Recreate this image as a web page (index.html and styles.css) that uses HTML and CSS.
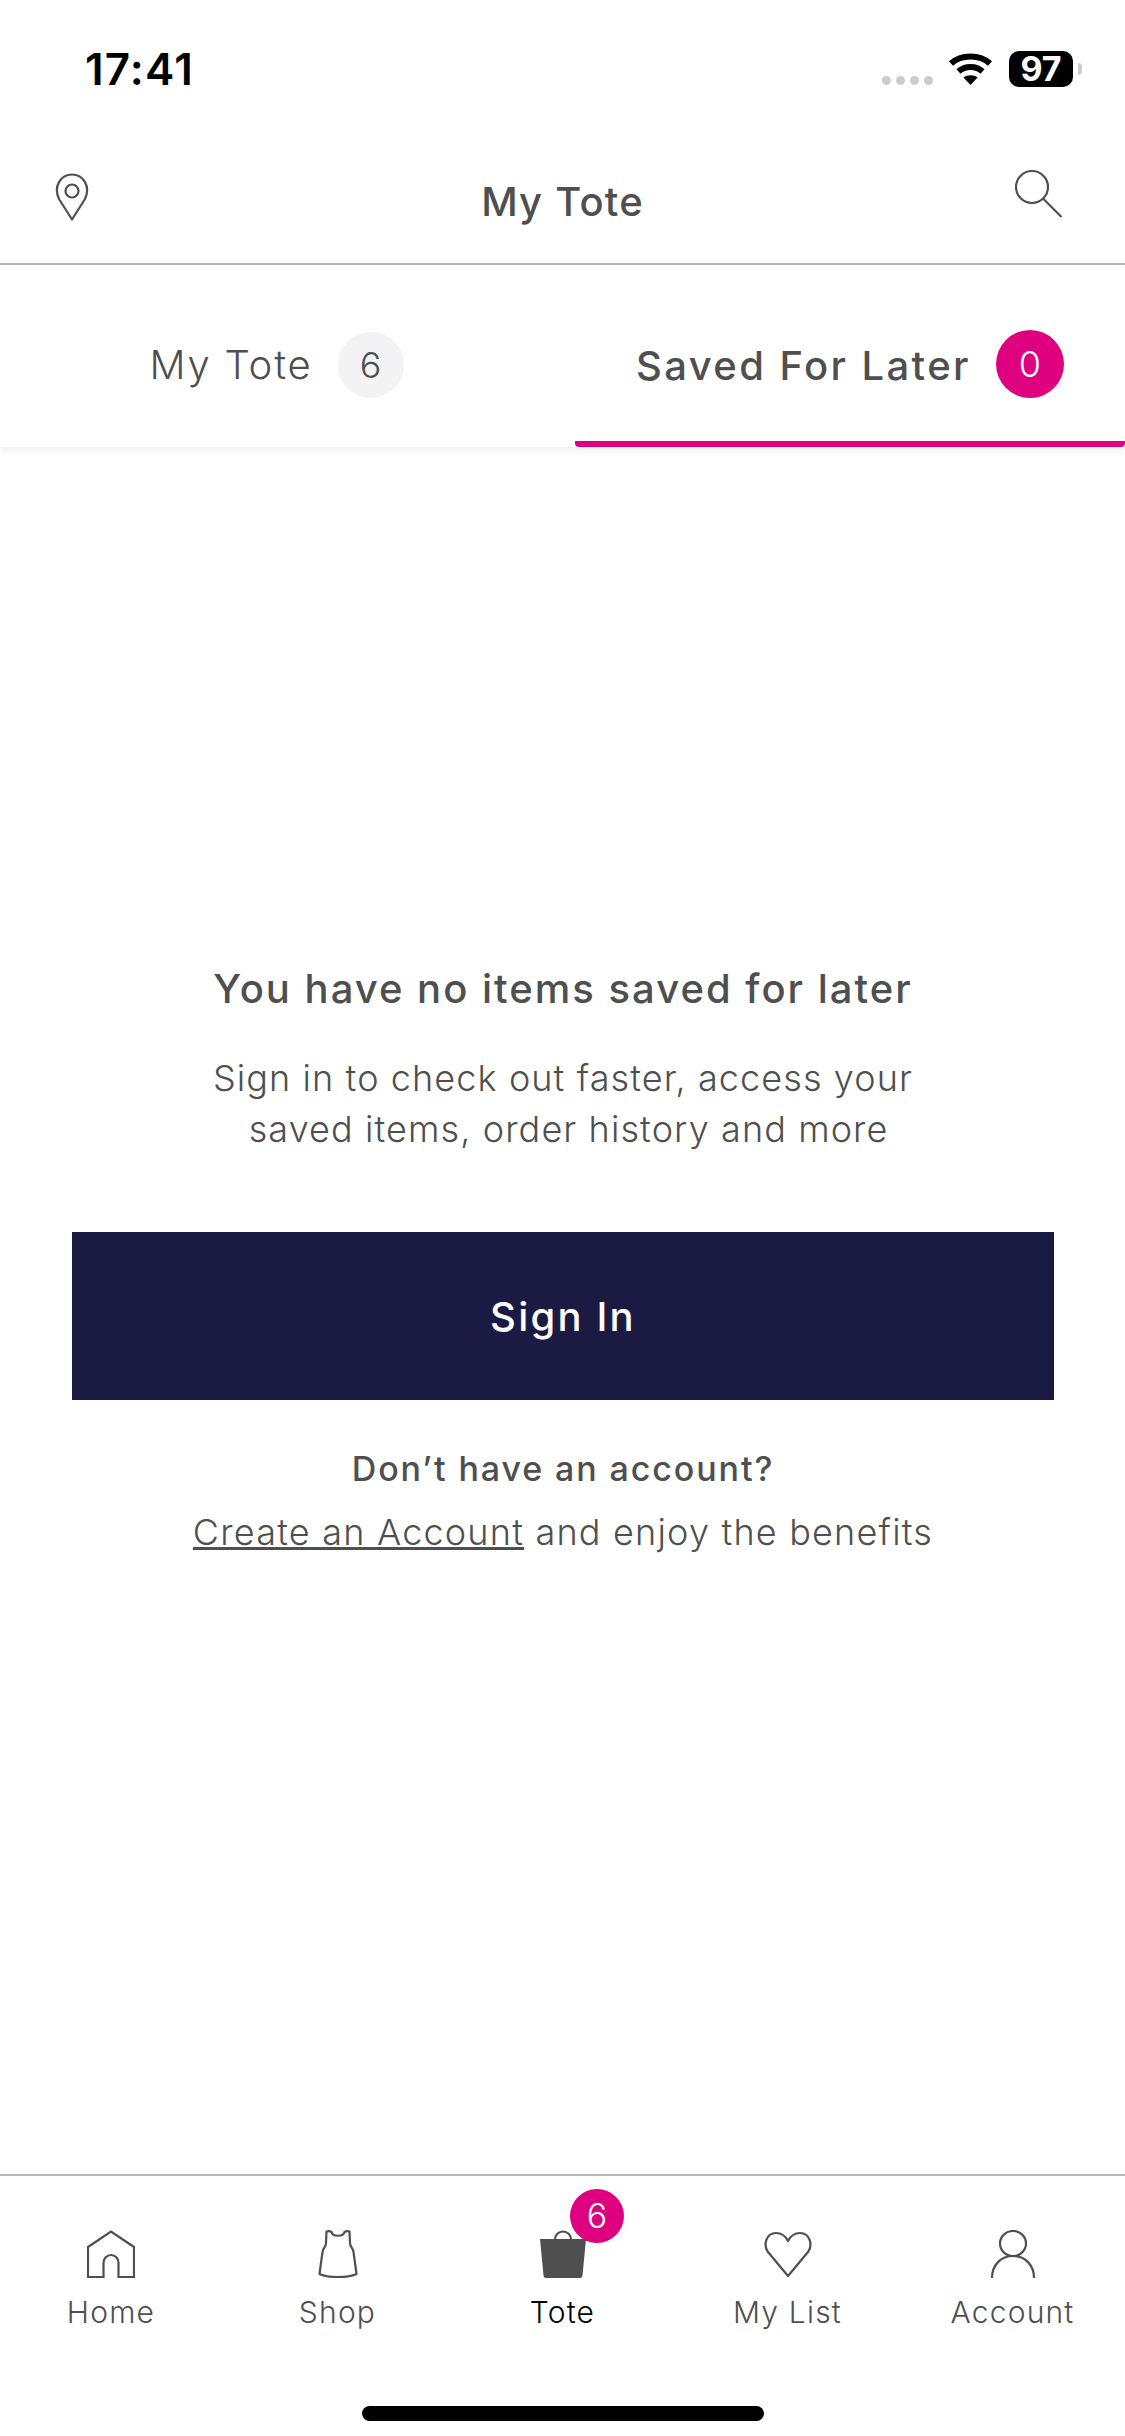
FILE: index.html
```html
<!DOCTYPE html>
<html lang="en">
<head>
    <meta charset="UTF-8">
    <meta name="viewport" content="width=device-width, initial-scale=1.0">
    <title>My Tote</title>
    <link rel="stylesheet" href="styles.css">
</head>
<body>
    <div class="app">
        <div class="status-bar">
            <span class="time">17:41</span>
            <div class="status-icons">
                <div class="signal"><i></i><i></i><i></i><i></i></div>
                <svg class="wifi" width="45" height="33" viewBox="0 0 45 33">
                    <path d="M3 11.5C13 2 32 2 42 11.5" fill="none" stroke="#000" stroke-width="6"/>
                    <path d="M10.500 19.500C17 13.500 28 13.500 34.500 19.500" fill="none" stroke="#000" stroke-width="6"/>
                    <path d="M15.500 25.500C19 22.500 26 22.500 29.500 25.500L22.500 33z" fill="#000"/>
                </svg>
                <div class="battery">97</div>
                <div class="battery-nub"></div>
            </div>
        </div>

        <div class="nav">
            <svg class="nav-pin" width="34" height="48" viewBox="0 0 34 48">
                <path d="M17 46.500L4 26C-2 13 6 1.500 17 1.500S36 13 30 26z" fill="none" stroke="#4f4f4f" stroke-width="2.200" stroke-linejoin="round"/>
                <circle cx="17" cy="18" r="6.500" fill="none" stroke="#4f4f4f" stroke-width="2.200"/>
            </svg>
            <h1 class="nav-title">My Tote</h1>
            <svg class="nav-search" width="48" height="50" viewBox="0 0 48 50">
                <circle cx="17" cy="18" r="16" fill="none" stroke="#4f4f4f" stroke-width="2.200"/>
                <path d="M28.500 30L46.500 48" fill="none" stroke="#4f4f4f" stroke-width="2.200"/>
            </svg>
        </div>

        <div class="tabs">
            <div class="tab">
                <span class="tab-label">My Tote</span>
                <span class="count">6</span>
            </div>
            <div class="tab tab-active">
                <span class="tab-label">Saved For Later</span>
                <span class="count">0</span>
            </div>
        </div>

        <div class="empty">
            <h2 class="empty-title">You have no items saved for later</h2>
            <p class="empty-text">Sign in to check out faster, access your<br>&nbsp;saved items, order history and more</p>
            <button class="sign-in">Sign In</button>
            <p class="no-account">Don’t have an account?</p>
            <p class="create"><a href="#">Create an Account</a> and enjoy the benefits</p>
        </div>

        <div class="tabbar">
            <div class="tabbar-items">
                <div class="item">
                    <svg width="48" height="48" viewBox="0 0 48 48">
                        <path d="M1 47V17L24 1.500 47 17v30H31.500V32.500a7.500 7.500 0 0 0-15 0V47z" fill="none" stroke="#4f4f4f" stroke-width="2.200"/>
                    </svg>
                    <span>Home</span>
                </div>
                <div class="item">
                    <svg width="40" height="48" viewBox="0 0 40 48">
                        <path d="M8.500 1.500C10 1 12 1 13.500 2C14.500 7 25.500 7 26.500 2C28 1 30 1 31.500 1.500L32 13C32 17 35 18 35.500 22L38.500 44C30 48 10 48 1.500 44L4.500 22C5 18 8 17 8 13z" fill="none" stroke="#4f4f4f" stroke-width="2.200" stroke-linejoin="round"/>
                    </svg>
                    <span>Shop</span>
                </div>
                <div class="item item-active">
                    <svg width="48" height="48" viewBox="0 0 48 48">
                        <path d="M16 9.500a8 8 0 0 1 16 0" fill="none" stroke="#4f4f4f" stroke-width="2.200"/>
                        <path d="M1 9H47L43.500 45.500Q43.300 48 41 48H7Q4.700 48 4.500 45.500z" fill="#4f4f4f"/>
                    </svg>
                    <span>Tote</span>
                    <span class="item-badge">6</span>
                </div>
                <div class="item">
                    <svg width="48" height="48" viewBox="0 0 48 48">
                        <path d="M24 46L4 22C-1 15 2 3 12 3C18 3 22 7 24 11C26 7 30 3 36 3C46 3 49 15 44 22z" fill="none" stroke="#4f4f4f" stroke-width="2.200" stroke-linejoin="round"/>
                    </svg>
                    <span>My List</span>
                </div>
                <div class="item">
                    <svg width="46" height="48" viewBox="0 0 46 48">
                        <ellipse cx="23" cy="13.500" rx="13" ry="12.500" fill="none" stroke="#4f4f4f" stroke-width="2.200"/>
                        <path d="M2 48C2 35 11 26 23 26S44 35 44 48" fill="none" stroke="#4f4f4f" stroke-width="2.200"/>
                    </svg>
                    <span>Account</span>
                </div>
            </div>
            <div class="home-bar"></div>
        </div>
    </div>
</body>
</html>
```

FILE: styles.css
```css
* {
    box-sizing: border-box;
}
body {
    margin: 0;
    background: white;
    font-family: Inter, "Liberation Sans", sans-serif;
    color: #4f4f4f;
}
.app {
    width: 1125px;
    height: 2436px;
    display: flex;
    flex-direction: column;
    overflow: hidden;
}
.status-bar {
    height: 100px;
    padding: 48px 43px 0 85px;
    display: flex;
    justify-content: space-between;
    align-items: flex-start;
}
.time {
    font-size: 44px;
    line-height: 42px;
    font-weight: 600;
    letter-spacing: 1.2px;
    color: #000;
}
.status-icons {
    display: flex;
    align-items: flex-start;
    margin-top: 3px;
}
.signal {
    display: flex;
    gap: 5px;
    margin-top: 25px;
    margin-right: 15px;
}
.signal i {
    width: 9px;
    height: 9px;
    border-radius: 50%;
    background: #ccc;
}
.wifi {
    margin-top: 1px;
    margin-right: 16px;
}
.battery {
    width: 64px;
    height: 36px;
    border-radius: 10px;
    background: #000;
    color: white;
    font-size: 34px;
    line-height: 36px;
    font-weight: 700;
    text-align: center;
}
.battery-nub {
    width: 4px;
    height: 12px;
    margin-top: 12px;
    margin-left: 5px;
    border-radius: 0 4px 4px 0;
    background: #ccc;
}
.nav {
    height: 165px;
    padding: 0 55px;
    border-bottom: 2px solid #b5b5b5;
    display: grid;
    grid-template-columns: 1fr auto 1fr;
    align-items: start;
}
.nav-pin {
    margin-top: 73px;
}
.nav-title {
    margin: 78px 0 0;
    font-size: 40px;
    line-height: 48px;
    font-weight: 500;
    letter-spacing: 1.2px;
}
.nav-search {
    margin-top: 69px;
    margin-right: 7px;
    justify-self: end;
}
.tabs {
    height: 182px;
    display: grid;
    grid-template-columns: 553px 550px;
    column-gap: 22px;
    align-items: stretch;
    box-shadow: 0 4px 6px rgba(0,0,0,0.06);
}
.tab {
    display: flex;
    justify-content: center;
    align-items: flex-start;
    gap: 25px;
    padding-top: 67px;
}
.tab-label {
    font-size: 40px;
    line-height: 66px;
    font-weight: 300;
    letter-spacing: 1.8px;
}
.count {
    width: 66px;
    height: 66px;
    border-radius: 50%;
    background: #f3f3f6;
    font-size: 36px;
    line-height: 66px;
    font-weight: 300;
    text-align: center;
}
.tab-active {
    border-bottom: 6px solid #df007f;
    border-radius: 0 0 4px 4px;
}
.tab-active .tab-label {
    padding-top: 1px;
    font-weight: 500;
    letter-spacing: 2.4px;
}
.tab-active .count {
    width: 68px;
    height: 68px;
    margin-top: -2px;
    background: #df007f;
    color: white;
    line-height: 68px;
}
.empty {
    flex: 1;
    padding: 518px 71px 0 72px;
    text-align: center;
}
.empty-title {
    margin: 0;
    font-size: 40px;
    line-height: 48px;
    font-weight: 500;
    letter-spacing: 2px;
}
.empty-text {
    margin: 40px 0 0;
    font-size: 36px;
    line-height: 51px;
    font-weight: 300;
    letter-spacing: 1.1px;
}
.sign-in {
    display: block;
    width: 100%;
    height: 168px;
    margin-top: 77px;
    border: none;
    background: #1b1a42;
    color: white;
    font-family: inherit;
    font-size: 40px;
    font-weight: 500;
    letter-spacing: 2.2px;
}
.no-account {
    margin: 47px 0 0;
    font-size: 34px;
    line-height: 44px;
    font-weight: 500;
    letter-spacing: 1.9px;
}
.create {
    margin: 19px 0 0;
    font-size: 36px;
    line-height: 44px;
    font-weight: 300;
    letter-spacing: 1.2px;
}
.create a {
    color: inherit;
}
.tabbar {
    height: 262px;
    border-top: 2px solid #b5b5b5;
    display: flex;
    flex-direction: column;
    align-items: center;
}
.tabbar-items {
    width: 100%;
    display: grid;
    grid-template-columns: repeat(5, 1fr);
    padding-top: 54px;
}
.item {
    position: relative;
    display: flex;
    flex-direction: column;
    align-items: center;
    gap: 16px;
    font-size: 30px;
    line-height: 36px;
    font-weight: 300;
    letter-spacing: 1.2px;
}
.item:first-child {
    padding-right: 3px;
}
.item svg {
    display: block;
}
.item-active {
    color: #000;
}
.item-badge {
    position: absolute;
    top: -41px;
    left: 120px;
    width: 54px;
    height: 54px;
    border-radius: 50%;
    background: #df007f;
    color: white;
    font-size: 34px;
    line-height: 54px;
    letter-spacing: 0;
    text-align: center;
}
.home-bar {
    width: 402px;
    height: 15px;
    margin-top: 76px;
    border-radius: 8px;
    background: #000;
}
```
